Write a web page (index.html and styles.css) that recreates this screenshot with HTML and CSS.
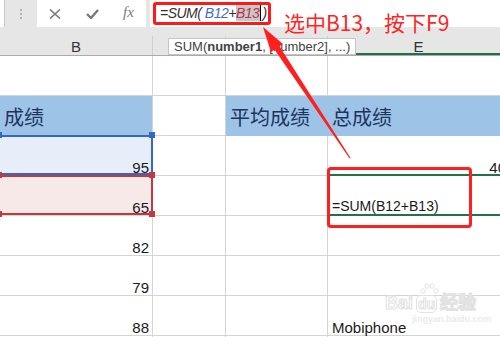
FILE: index.html
```html
<!DOCTYPE html>
<html lang="zh-CN">
<head>
  <meta charset="UTF-8">
  <title>SUM F9</title>
  <link rel="stylesheet" href="styles.css">
</head>
<body>
<div class="page">

  <div class="topbar">
    <div class="edge"></div>
    <div class="grip"><i></i><i></i><i></i></div>
    <div class="btns">
      <svg class="ico" width="12" height="10" viewBox="0 0 12 10"><path d="M1 0.5 L11 9.5 M11 0.5 L1 9.5" stroke="#7a7a7a" stroke-width="1.6"/></svg>
      <svg class="ico" width="13" height="10" viewBox="0 0 13 10"><path d="M1 5 L5 9 L12 1" fill="none" stroke="#7a7a7a" stroke-width="2.4"/></svg>
      <span class="fx">fx</span>
    </div>
    <div class="formula">
      <span class="fbox">=SUM( <span class="ref-b">B12</span>+<span class="ref-r">B13</span><span class="caret"></span>)</span>
      <span class="note">选中B13，按下F9</span>
    </div>
  </div>

  <div class="colheads">
    <div class="ch">B</div>
    <div class="ch"></div>
    <div class="ch"></div>
    <div class="ch ch-sel">E</div>
  </div>

  <div class="sheet">
    <div class="c"></div><div class="c"></div><div class="c"></div><div class="c"></div>

    <div class="c hd">成绩</div><div class="c"></div><div class="c hd hd-d">平均成绩</div><div class="c hd">总成绩</div>

    <div class="c num sel-b">95<span class="h h-tl"></span><span class="h h-tr"></span></div>
    <div class="c"></div><div class="c"></div><div class="c num">40</div>

    <div class="c num sel-r">65<span class="h h-tl"></span><span class="h h-tr"></span><span class="h h-bl"></span><span class="h h-br"></span></div>
    <div class="c"></div><div class="c"></div><div class="c copy">=SUM(B12+B13)</div>

    <div class="c num">82</div><div class="c"></div><div class="c"></div><div class="c"></div>
    <div class="c num">79</div><div class="c"></div><div class="c"></div><div class="c"></div>
    <div class="c num">88</div><div class="c"></div><div class="c"></div><div class="c">Mobiphone</div>
    <div class="c"></div><div class="c"></div><div class="c"></div><div class="c"></div>
  </div>

  <!-- annotations drawn over the sheet -->
  <div class="tip">SUM(<b>number1</b>, [number2], ...)</div>
  <div class="mark-box"></div>
  <svg class="arrow" width="500" height="337" viewBox="0 0 500 337">
    <polygon points="263,27 283,44 279.5,46.3 350.6,158 349.6,158.4 274.5,49.6 271,52" fill="#ff1f1f"/>
  </svg>
  <div class="wm">
    <svg class="paw" width="22" height="12" viewBox="0 0 22 12">
      <g fill="none" stroke="#e4e4e4"><circle cx="5" cy="8" r="2.2"/><circle cx="9" cy="3" r="2.2"/><circle cx="14" cy="3" r="2.2"/><circle cx="18" cy="8" r="2.2"/></g>
    </svg>
    <div class="wm-big">Bai<span class="wm-du">du</span>经验</div>
    <div class="wm-url">jingyan.baidu.com</div>
  </div>

</div>
</body>
</html>
```

FILE: styles.css
```css
* {
  box-sizing: border-box;
}
body {
  margin: 0;
  background: #fff;
  font-family: "Liberation Sans", Arial, sans-serif;
  color: #222;
}
.page {
  width: 500px;
  height: 337px;
  overflow: hidden;
  position: relative;
}

/* formula bar */
.topbar {
  display: flex;
  height: 36px;
  background: #e6e6e6;
}
.edge {
  width: 5px;
  height: 27px;
  background: #fff;
  border-right: 1px solid #c8c8c8;
}
.grip {
  width: 32px;
  display: flex;
  flex-direction: column;
  align-items: center;
  gap: 2px;
  padding-top: 9px;
}
.grip i {
  width: 2px;
  height: 2px;
  background: #b3b3b3;
}
.btns {
  width: 109px;
  height: 27px;
  background: #fff;
  display: flex;
  align-items: center;
  justify-content: space-around;
}
.fx {
  font-family: "Liberation Serif", serif;
  font-style: italic;
  font-size: 15px;
  color: #7a7a7a;
  margin-top: -2px;
}
.formula {
  flex: 1;
  margin-left: 4px;
  height: 27px;
  background: #fff;
  display: flex;
  align-items: flex-start;
  padding: 2px 0 0 3px;
}
.fbox {
  width: 118px;
  height: 23px;
  border: 3px solid #ff1a1a;
  border-radius: 3px;
  padding: 0 0 0 4px;
  font-style: italic;
  font-size: 14px;
  line-height: 17px;
  letter-spacing: -0.5px;
  color: #333;
  white-space: nowrap;
}
.ref-b {
  color: #3f6fc6;
}
.ref-r {
  color: #c0304a;
  background: #c8c8c8;
  padding-right: 1px;
}
.caret {
  display: inline-block;
  width: 1px;
  height: 16px;
  background: #000;
  vertical-align: -3px;
  margin-right: 1px;
}
.note {
  margin: 10px 0 0 13px;
  font-family: "Noto Sans CJK SC", sans-serif;
  font-size: 21px;
  line-height: 20px;
  color: #ff2424;
  white-space: nowrap;
}

/* column headers */
.colheads {
  display: grid;
  grid-template-columns: 153px 73px 102px 182px;
  height: 20px;
  background: #e6e6e6;
  border-bottom: 1px solid #ababab;
}
.ch {
  border-right: 1px solid #cfcfcf;
  text-align: center;
  font-size: 15px;
  line-height: 17px;
  padding-top: 2px;
  color: #333;
}
.ch-sel {
  box-shadow: inset 0 -2px 0 #217346;
}

/* sheet */
.sheet {
  display: grid;
  grid-template-columns: 153px 73px 102px 182px;
  grid-auto-rows: 40px;
}
.c {
  position: relative;
  display: flex;
  align-items: flex-end;
  border-right: 1px solid #d4d4d4;
  border-bottom: 1px solid #d4d4d4;
  padding: 0 3px 0 4px;
  font-size: 15px;
  line-height: 15px;
  color: #1a1a1a;
  white-space: nowrap;
}
.num {
  justify-content: flex-end;
}
.hd {
  align-items: center;
  padding-top: 2px;
  background: #9dc3e6;
  border-bottom-color: #9dc3e6;
  font-family: "Noto Sans CJK SC", sans-serif;
  font-size: 20px;
  line-height: 20px;
  color: #1d3461;
}
.hd-d {
  border-right-color: #9dc3e6;
}
.sel-b {
  background: #e8eef9;
}
.sel-b::after {
  content: "";
  position: absolute;
  left: -2px;
  top: -1px;
  right: -1px;
  bottom: 0;
  border: 2px solid #3368c4;
}
.sel-r {
  background: #f8e9e9;
}
.sel-r::after {
  content: "";
  position: absolute;
  left: -2px;
  top: -1px;
  right: -1px;
  bottom: 0;
  border: 2px solid #c2393f;
}
.h {
  position: absolute;
  width: 6px;
  height: 6px;
  z-index: 1;
}
.sel-b .h {
  background: #3368c4;
}
.sel-r .h {
  background: #c2393f;
}
.h-tl { left: -4px; top: -4px; }
.h-tr { right: -3px; top: -4px; }
.h-bl { left: -4px; bottom: -2px; }
.h-br { right: -3px; bottom: -2px; }
.copy {
  font-size: 14px;
  border-bottom: 2px solid #217346;
  box-shadow: 0 -2px 0 #217346;
}

/* annotations */
.tip {
  position: absolute;
  left: 168px;
  top: 38px;
  width: 188px;
  height: 17px;
  padding-left: 5px;
  background: #fff;
  border: 1px solid #c6c6c6;
  font-size: 13px;
  line-height: 15px;
  color: #444;
  white-space: nowrap;
}
.mark-box {
  position: absolute;
  left: 327px;
  top: 167px;
  width: 145px;
  height: 61px;
  border: 3px solid #ff1f1f;
  border-radius: 4px;
}
.arrow {
  position: absolute;
  left: 0;
  top: 0;
}
.wm {
  position: absolute;
  left: 385px;
  top: 283px;
  width: 90px;
}
.paw {
  display: block;
  margin-left: 33px;
}
.wm-big {
  font-size: 18px;
  font-weight: bold;
  line-height: 16px;
  color: #fff;
  -webkit-text-stroke: 1px #e2e2e2;
  white-space: nowrap;
}
.wm-du {
  font-size: 14px;
  margin: 0 3px;
  padding: 0 1px;
  border: 1px solid #e2e2e2;
  border-radius: 5px;
}
.wm-url {
  margin: 2px 0 0 27px;
  font-size: 9px;
  font-weight: bold;
  color: #ebebeb;
}
```
